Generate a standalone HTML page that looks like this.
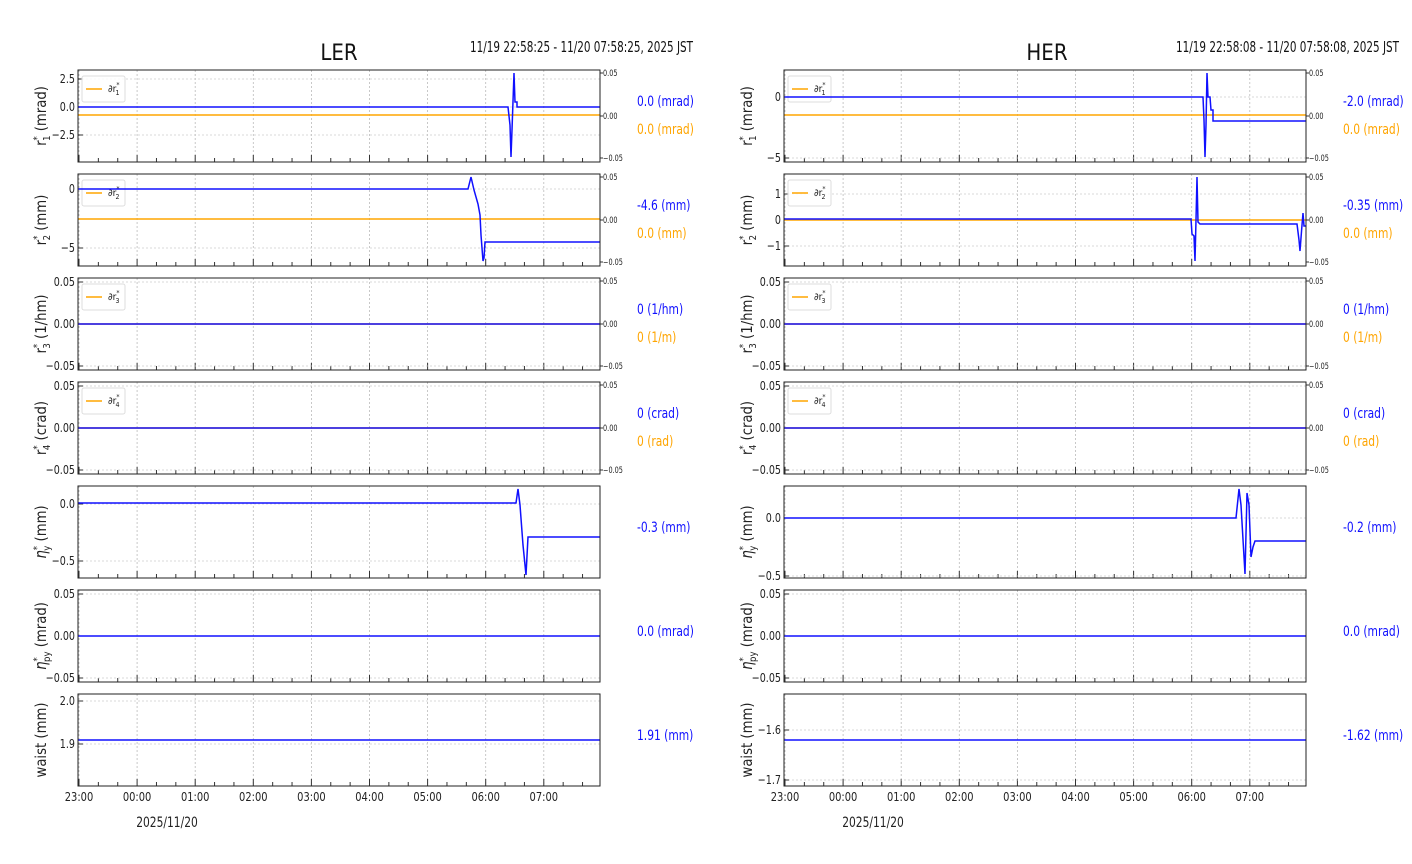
<!DOCTYPE html>
<html><head><meta charset="utf-8">
<style>
html,body{margin:0;padding:0;background:#fff;width:1412px;height:864px;overflow:hidden}
svg{display:block;font-family:"DejaVu Sans Condensed","Liberation Sans Narrow","Liberation Sans",sans-serif}
</style></head><body>
<svg id="s" width="1412" height="864" viewBox="0 0 1412 864" xmlns="http://www.w3.org/2000/svg">
<text x="339" y="60" font-size="22" text-anchor="middle" fill="#111">LER</text>
<text x="693" y="52" font-size="15" text-anchor="end" fill="#111" textLength="223" lengthAdjust="spacingAndGlyphs">11/19 22:58:25 - 11/20 07:58:25, 2025 JST</text>
<text x="1047" y="60" font-size="22" text-anchor="middle" fill="#111">HER</text>
<text x="1399" y="52" font-size="15" text-anchor="end" fill="#111" textLength="223" lengthAdjust="spacingAndGlyphs">11/19 22:58:08 - 11/20 07:58:08, 2025 JST</text>
</svg>
<script>
const s=document.getElementById('s');let h='';
const B='#1010ff',O='#ffa500';
function T(x,y,size,anchor,fill,c,sx){return `<text transform="translate(${x},${y}) scale(${sx},1)" font-size="${size}" text-anchor="${anchor}" fill="${fill}">${c}</text>`;}
const ylabs=['(mrad)','(mm)','(1/hm)','(crad)','(mm)','(mrad)',''];
const ysub=['1','2','3','4','y','py',''];
const sides=[
 {x0:78,x1:600,g0:79,
  ticks:[[['2.5',79],['0.0',107],['−2.5',135]],[['0',189],['−5',248]],[['0.05',282],['0.00',324],['−0.05',366]],[['0.05',386],['0.00',428],['−0.05',470]],[['0.0',504],['−0.5',561]],[['0.05',594],['0.00',636],['−0.05',678]],[['2.0',701],['1.9',744]]],
  vals:[['0.0 (mrad)','0.0 (mrad)'],['-4.6 (mm)','0.0 (mm)'],['0 (1/hm)','0 (1/m)'],['0 (crad)','0 (rad)'],['-0.3 (mm)'],['0.0 (mrad)'],['1.91 (mm)']],
  blue:[
   [[78,107],[508,107],[510,125],[511,157],[512,130],[514,73],[515,102],[517,102],[517,107],[600,107]],
   [[78,189],[468,189],[471,177],[474,190],[478,204],[480,215],[481,235],[483,261],[484,258],[485,242],[600,242]],
   [[78,324],[600,324]],[[78,428],[600,428]],
   [[78,503],[516,503],[518,489],[520,505],[523,545],[526,575],[528,537],[600,537]],
   [[78,636],[600,636]],[[78,740],[600,740]]],
  orange:[115,219,324,428]},
 {x0:784,x1:1306,g0:785,
  ticks:[[['0',97],['−5',158]],[['1',194],['0',220],['−1',246]],[['0.05',282],['0.00',324],['−0.05',366]],[['0.05',386],['0.00',428],['−0.05',470]],[['0.0',518],['−0.5',576]],[['0.05',594],['0.00',636],['−0.05',678]],[['−1.6',730],['−1.7',780]]],
  vals:[['-2.0 (mrad)','0.0 (mrad)'],['-0.35 (mm)','0.0 (mm)'],['0 (1/hm)','0 (1/m)'],['0 (crad)','0 (rad)'],['-0.2 (mm)'],['0.0 (mrad)'],['-1.62 (mm)']],
  blue:[
   [[784,97],[1203,97],[1204,120],[1205,157],[1206,125],[1207,73],[1208,97],[1210,97],[1211,110],[1213,110],[1213,121],[1306,121]],
   [[784,219],[1191,219],[1192,234],[1194,236],[1195,261],[1196,220],[1197,177],[1198,222],[1200,224],[1297,224],[1299,240],[1300,251],[1302,225],[1303,213],[1304,226],[1306,226]],
   [[784,324],[1306,324]],[[784,428],[1306,428]],
   [[784,518],[1236,518],[1239,489],[1241,505],[1245,574],[1247,493],[1249,505],[1251,557],[1253,547],[1255,541],[1306,541]],
   [[784,636],[1306,636]],[[784,740],[1306,740]]],
  orange:[115,220,324,428]}];
const ryt=[73,116,158];
sides.forEach(S=>{
 for(let p=0;p<7;p++){
  const y0=70+104*p,y1=y0+92;
  for(let k=0;k<9;k++){const x=S.g0+58.1*k;h+=`<line x1="${x}" y1="${y0}" x2="${x}" y2="${y1}" stroke="#bbb" stroke-width="0.8" stroke-dasharray="2,2"/>`;
   h+=`<line x1="${x}" y1="${y1}" x2="${x}" y2="${y1-7}" stroke="#333"/>`;
   for(let m=1;m<3;m++){const xm=x+58.1*m/3;if(xm<S.x1)h+=`<line x1="${xm}" y1="${y1}" x2="${xm}" y2="${y1-4}" stroke="#333"/>`;}
  }
  S.ticks[p].forEach(t=>{h+=`<line x1="${S.x0}" y1="${t[1]}" x2="${S.x1}" y2="${t[1]}" stroke="#ccc" stroke-width="0.8" stroke-dasharray="2,2"/><line x1="${S.x0}" y1="${t[1]}" x2="${S.x0+5}" y2="${t[1]}" stroke="#333"/>`+T(S.x0-3,t[1]+4,12.5,'end','#222',t[0],0.85);});
  if(p<4){h+=`<line x1="${S.x0}" y1="${S.orange[p]}" x2="${S.x1}" y2="${S.orange[p]}" stroke="${O}" stroke-width="1.5"/>`;
   ryt.forEach((ry,i)=>{const yy=y0+3+(ry-73);h+=`<line x1="${S.x1}" y1="${yy}" x2="${S.x1+3}" y2="${yy}" stroke="#333"/>`+T(S.x1+3,yy+3,8.5,'start','#222',['0.05','0.00','−0.05'][i],0.85);});
   h+=`<rect x="${S.x0+4}" y="${y0+6}" width="43" height="26" rx="2" fill="#fff" fill-opacity="0.85" stroke="#ddd"/><line x1="${S.x0+8}" y1="${y0+19}" x2="${S.x0+24}" y2="${y0+19}" stroke="${O}" stroke-width="1.5"/><text x="${S.x0+30}" y="${y0+22}" font-size="10" fill="#222">∂r<tspan font-size="7" dy="-5">*</tspan><tspan font-size="7" dy="8" dx="-4">${p+1}</tspan></text>`;
  }
  h+=`<polyline fill="none" stroke="${B}" stroke-width="1.5" points="${S.blue[p].map(a=>a.join(',')).join(' ')}"/>`;
  h+=`<rect x="${S.x0}" y="${y0}" width="${S.x1-S.x0}" height="92" fill="none" stroke="#222" stroke-width="1"/>`;
  const cx=S.x0-38,cy=y0+46;
  let lab= p==6?'waist (mm)':`<tspan font-style="${p>=4?'italic':'normal'}">${p>=4?'η':'r'}</tspan><tspan font-size="10" dy="-6">*</tspan><tspan font-size="10" dy="10" dx="-5">${ysub[p]}</tspan><tspan dy="-4"> ${ylabs[p]}</tspan>`;
  h+=`<text transform="translate(${cx+6},${cy}) rotate(-90) scale(0.95,1)" font-size="15.5" text-anchor="middle" fill="#222">${lab}</text>`;
  const v=S.vals[p];
  if(v.length==2){h+=T(S.x1+37,y0+36,14.5,'start',B,v[0],0.82)+T(S.x1+37,y0+64,14.5,'start',O,v[1],0.82);}
  else h+=T(S.x1+37,y0+46,14.5,'start',B,v[0],0.82);
 }
 ['23:00','00:00','01:00','02:00','03:00','04:00','05:00','06:00','07:00'].forEach((t,k)=>{h+=T(S.g0+58.1*k,801,12.5,'middle','#222',t,0.88);});
 h+=T(S.g0+88,827,14.5,'middle','#222','2025/11/20',0.82);
});
s.insertAdjacentHTML('beforeend',h);
</script>
</body></html>
